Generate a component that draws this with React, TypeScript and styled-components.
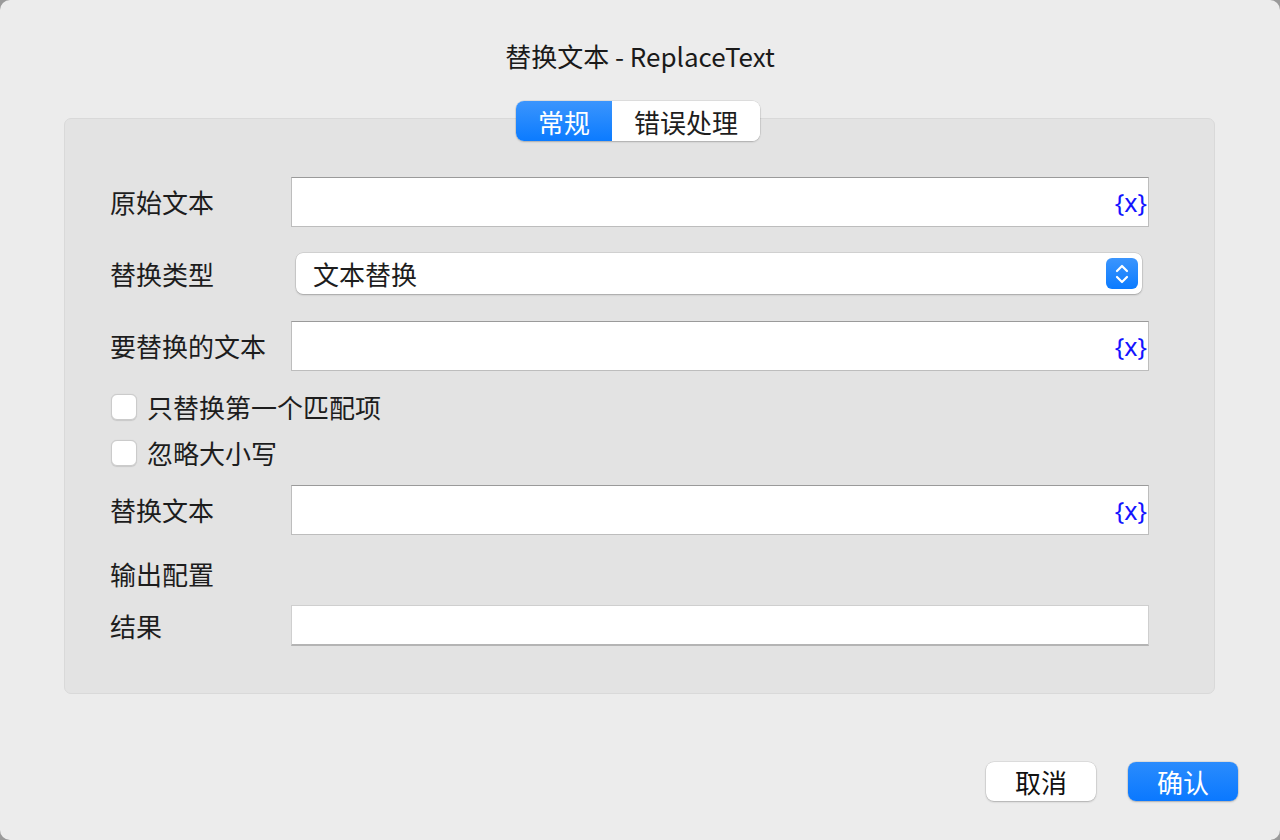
import styled, { createGlobalStyle } from "styled-components";

const GlobalStyle = createGlobalStyle`
  html, body {
    margin: 0;
    padding: 0;
    background: #9a9a9a;
  }
  body {
    font-family: "Noto Sans CJK SC", "Noto Sans", "Liberation Sans", sans-serif;
    color: #1d1d1d;
  }
`;

const Janela = styled.div`
  width: 1280px;
  height: 840px;
  background: #ececec;
  border-radius: 10px;
  display: flex;
  flex-direction: column;
  box-sizing: border-box;
  overflow: hidden;
`;

const Titulo = styled.div`
  margin-top: 39px;
  height: 34px;
  line-height: 34px;
  text-align: center;
  font-size: 26px;
  color: #1a1a1a;
`;

const Abas = styled.div`
  margin-top: 28px;
  align-self: center;
  display: flex;
  height: 40px;
  border-radius: 8px;
  background: #fff;
  box-shadow: 0 0 0 0.5px rgba(0, 0, 0, 0.12), 0 1px 2px rgba(0, 0, 0, 0.2);
  position: relative;
  z-index: 1;
  transform: translateX(-2px);
`;

const Aba = styled.div<{ $ativa?: boolean }>`
  width: ${(p) => (p.$ativa ? "96px" : "148px")};
  display: flex;
  align-items: center;
  justify-content: center;
  font-size: 26px;
  border-radius: ${(p) => (p.$ativa ? "8px 0 0 8px" : "0 8px 8px 0")};
  color: ${(p) => (p.$ativa ? "#fff" : "#1d1d1d")};
  background: ${(p) => (p.$ativa ? "linear-gradient(#3b95fd, #0b7bff)" : "#fff")};
`;

const Grupo = styled.div`
  margin: -23px 65px 0 64px;
  background: #e3e3e3;
  border: 1px solid #d9d9d9;
  border-radius: 7px;
  padding: 58px 65px 47px 45px;
  display: flex;
  flex-direction: column;
`;

const Linha = styled.div<{ $top: number }>`
  display: flex;
  align-items: center;
  margin-top: ${(p) => p.$top}px;
`;

const Rotulo = styled.div`
  width: 181px;
  flex-shrink: 0;
  font-size: 26px;
  line-height: 30px;
  color: #1d1d1d;
`;

const Campo = styled.div<{ $alto?: number }>`
  flex: 1;
  height: ${(p) => p.$alto ?? 50}px;
  box-sizing: border-box;
  background: #fff;
  border: 1px solid #bdbdbd;
  border-top-color: #9a9a9a;
  display: flex;
  align-items: center;
  justify-content: flex-end;
  padding-right: 1px;
`;

const CampoResultado = styled(Campo)`
  border: 1px solid #cfcfcf;
  border-bottom: 2px solid #b4b4b4;
`;

const Variavel = styled.span`
  color: #1414ff;
  font-family: "Noto Sans", "Liberation Sans", sans-serif;
  font-size: 25px;
  line-height: 30px;
`;

const Selecao = styled.div`
  flex: 1;
  margin: 0 7px 0 5px;
  height: 41px;
  box-sizing: border-box;
  background: #fff;
  border-radius: 7px;
  box-shadow: 0 0 0 0.5px rgba(0, 0, 0, 0.14), 0 1px 2px rgba(0, 0, 0, 0.22);
  display: flex;
  align-items: center;
  justify-content: space-between;
  padding: 0 4px 0 17px;
  font-size: 26px;
`;

const Seta = styled.div`
  width: 32px;
  height: 31px;
  border-radius: 6px;
  background: linear-gradient(#3b95fd, #0b7bff);
  display: flex;
  align-items: center;
  justify-content: center;
`;

const Opcao = styled.label`
  display: flex;
  align-items: center;
  gap: 10px;
  font-size: 26px;
  line-height: 30px;
  padding-left: 1px;
`;

const Caixa = styled.span`
  width: 26px;
  height: 26px;
  box-sizing: border-box;
  border-radius: 6px;
  background: #fff;
  border: 1px solid #cbcbcb;
  box-shadow: 0 0.5px 1px rgba(0, 0, 0, 0.12);
`;

const Secao = styled.div`
  margin-top: 24px;
  font-size: 26px;
  line-height: 30px;
`;

const Rodape = styled.div`
  margin-top: auto;
  margin-bottom: 39px;
  margin-right: 42px;
  display: flex;
  justify-content: flex-end;
  gap: 32px;
`;

const Botao = styled.button<{ $primario?: boolean }>`
  width: 110px;
  height: 39px;
  border: none;
  border-radius: 8px;
  font-family: inherit;
  font-size: 26px;
  padding: 0;
  color: ${(p) => (p.$primario ? "#fff" : "#111")};
  background: ${(p) => (p.$primario ? "linear-gradient(#2a8cfd, #0a78ff)" : "#fff")};
  box-shadow: 0 0 0 0.5px rgba(0, 0, 0, 0.12), 0 1px 2px rgba(0, 0, 0, 0.22);
`;

function CampoTexto() {
  return (
    <Campo>
      <Variavel>{"{x}"}</Variavel>
    </Campo>
  );
}

export default function App() {
  return (
    <>
      <GlobalStyle />
      <Janela>
        <Titulo>替换文本 - ReplaceText</Titulo>
        <Abas>
          <Aba $ativa>常规</Aba>
          <Aba>错误处理</Aba>
        </Abas>
        <Grupo>
          <Linha $top={0}>
            <Rotulo>原始文本</Rotulo>
            <CampoTexto />
          </Linha>
          <Linha $top={26}>
            <Rotulo>替换类型</Rotulo>
            <Selecao>
              <span>文本替换</span>
              <Seta>
                <svg width="16" height="22" viewBox="0 0 16 22" fill="none">
                  <path d="M3 8 L8 3 L13 8" stroke="#fff" strokeWidth="2.2" strokeLinecap="round" strokeLinejoin="round" />
                  <path d="M3 14 L8 19 L13 14" stroke="#fff" strokeWidth="2.2" strokeLinecap="round" strokeLinejoin="round" />
                </svg>
              </Seta>
            </Selecao>
          </Linha>
          <Linha $top={27}>
            <Rotulo>要替换的文本</Rotulo>
            <CampoTexto />
          </Linha>
          <Linha $top={21}>
            <Opcao>
              <Caixa />
              只替换第一个匹配项
            </Opcao>
          </Linha>
          <Linha $top={16}>
            <Opcao>
              <Caixa />
              忽略大小写
            </Opcao>
          </Linha>
          <Linha $top={17}>
            <Rotulo>替换文本</Rotulo>
            <CampoTexto />
          </Linha>
          <Secao>输出配置</Secao>
          <Linha $top={16}>
            <Rotulo>结果</Rotulo>
            <CampoResultado $alto={41} />
          </Linha>
        </Grupo>
        <Rodape>
          <Botao>取消</Botao>
          <Botao $primario>确认</Botao>
        </Rodape>
      </Janela>
    </>
  );
}
